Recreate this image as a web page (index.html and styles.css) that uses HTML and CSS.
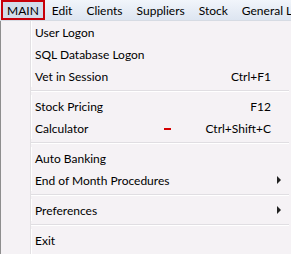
FILE: index.html
```html
<!DOCTYPE html>
<html lang="en">
<head>
    <meta charset="UTF-8">
    <title>Main menu</title>
    <link rel="stylesheet" href="styles.css">
</head>
<body>

    <div class="menubar">
        <span class="top-item active">MAIN</span>
        <span class="top-item">Edit</span>
        <span class="top-item">Clients</span>
        <span class="top-item">Suppliers</span>
        <span class="top-item">Stock</span>
        <span class="top-item">General Ledger</span>
    </div>

    <div class="menu">
        <div class="item"><span>User Logon</span></div>
        <div class="item"><span>SQL Database Logon</span></div>
        <div class="item"><span>Vet in Session</span><span class="key">Ctrl+F1</span></div>
        <div class="sep"></div>
        <div class="item"><span>Stock Pricing</span><span class="key">F12</span></div>
        <div class="item"><span>Calculator</span><span class="key"><i class="dash"></i>Ctrl+Shift+C</span></div>
        <div class="sep"></div>
        <div class="item"><span>Auto Banking</span></div>
        <div class="item"><span>End of Month Procedures</span><span></span><span class="arrow"></span></div>
        <div class="sep"></div>
        <div class="item"><span>Preferences</span><span></span><span class="arrow"></span></div>
        <div class="sep"></div>
        <div class="item"><span>Exit</span></div>
    </div>

</body>
</html>
```

FILE: styles.css
```css
body {
    margin: 0;
    width: 291px;
    height: 254px;
    overflow: hidden;
    background: #f5f2f5;
    font-family: Lato, "Liberation Sans", sans-serif;
    font-size: 12px;
    color: #000;
}

.menubar {
    display: flex;
    height: 21px;
    align-items: stretch;
    background: linear-gradient(#f1f5fb, #dde5f1);
    border-bottom: 1px solid #d6dbe3;
    box-sizing: border-box;
    white-space: nowrap;
}

.top-item {
    display: flex;
    align-items: center;
    padding: 0 7px;
}

.top-item.active {
    margin-left: 1px;
    padding: 0 4px;
    border: 2px solid #c8000a;
    background: #d3dcea;
}

.menu {
    border-left: 1px solid #8e8e8e;
    height: 233px;
    background: linear-gradient(to right,
        #f5f2f5 29px, #e2e0e3 29px, #e2e0e3 30px,
        #ffffff 30px, #ffffff 31px, #f5f2f5 31px);
}

.item {
    display: grid;
    grid-template-columns: 1fr auto 20px;
    align-items: center;
    height: 22px;
    padding-left: 34px;
}

.key {
    text-align: right;
}

.dash {
    display: inline-block;
    width: 7px;
    height: 2px;
    background: #d40000;
    margin-right: 35px;
    vertical-align: middle;
}

.arrow {
    justify-self: start;
    margin-left: 6px;
    width: 0;
    height: 0;
    border-top: 4px solid transparent;
    border-bottom: 4px solid transparent;
    border-left: 4px solid #222;
}

.sep {
    height: 8px;
    margin-left: 30px;
    margin-right: 2px;
    background: linear-gradient(#f5f2f5 3px, #e0dee2 3px, #e0dee2 4px, #ffffff 4px, #ffffff 5px, #f5f2f5 5px);
}
```
